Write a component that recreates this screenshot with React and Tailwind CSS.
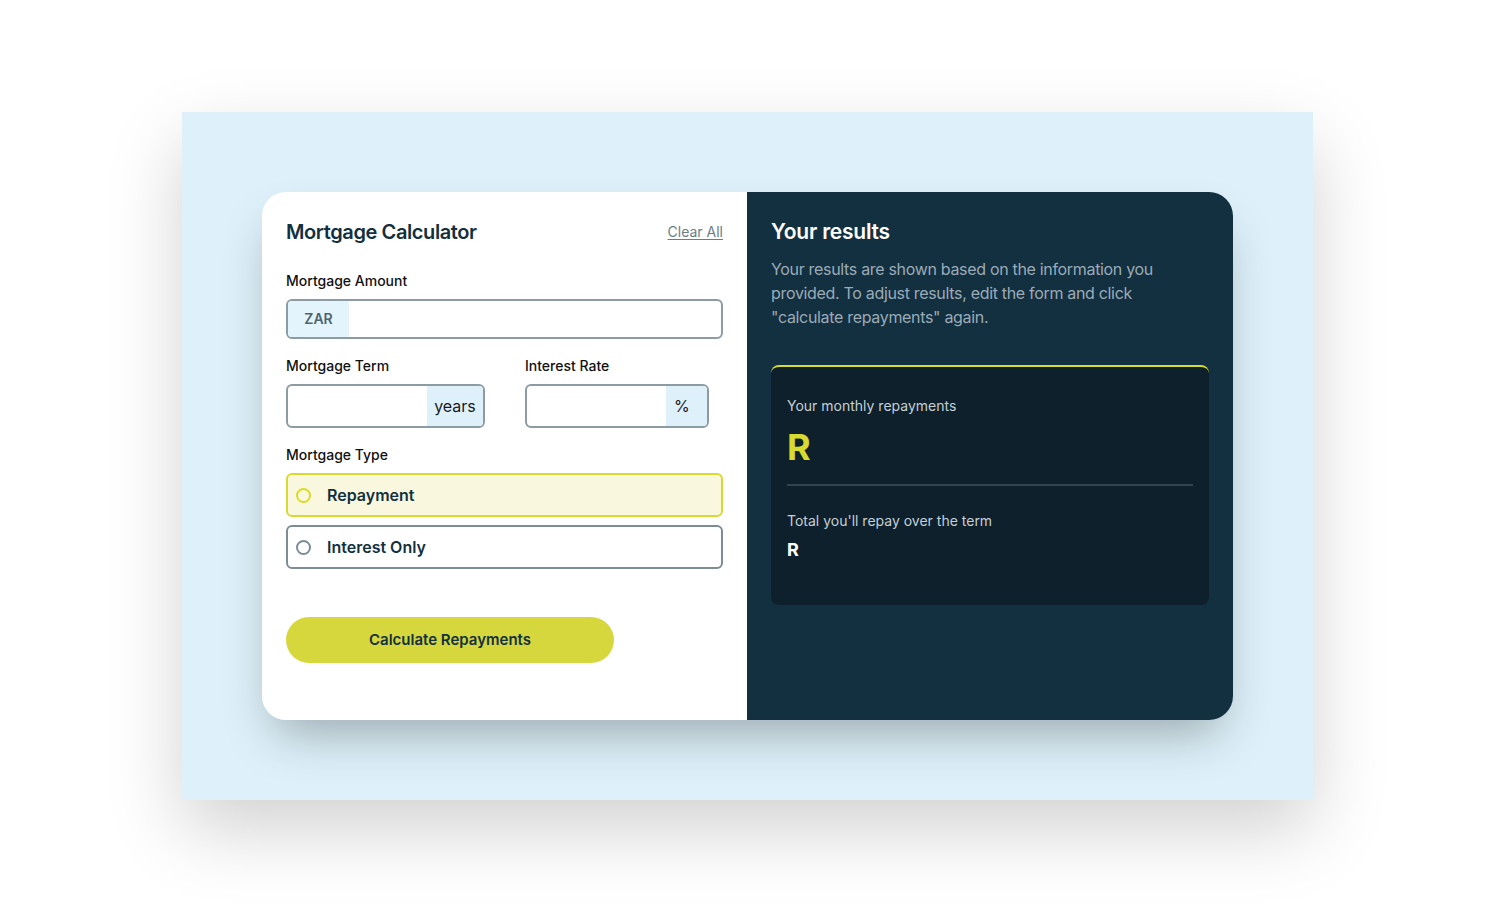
export default function App() {
  return (
    <div className="min-h-[903px] bg-white flex justify-center pt-[112px] pl-[3px]" style={{ fontFamily: "Inter, 'Noto Sans', sans-serif" }}>
      <div className="w-[1131px] h-[688px] bg-[#def1fa] shadow-[0_30px_70px_rgba(0,0,0,0.18)] flex justify-center pt-[80px]">
        <div className="w-[971px] h-[528px] flex rounded-3xl shadow-[0_25px_50px_-12px_rgba(0,0,0,0.3)]">
          {/* Form */}
          <div className="w-[485px] bg-white rounded-l-3xl p-6">
            <div className="flex items-center justify-between h-7 mt-0.5">
              <h1 className="text-xl font-semibold tracking-[-0.02em] text-[#133040]">Mortgage Calculator</h1>
              <button className="text-sm text-[#6b7c88] underline underline-offset-2">Clear All</button>
            </div>

            <label className="block mt-[25px] mb-2 text-sm font-medium text-[#111] leading-5">Mortgage Amount</label>
            <div className="flex h-10 border-2 border-[#8d9ba3] rounded-md overflow-hidden">
              <span className="w-[61px] bg-[#e3f4fc] flex items-center justify-center text-sm font-semibold text-[#4e6470]">ZAR</span>
              <input className="flex-1 outline-none px-3" />
            </div>

            <div className="flex gap-10 mt-[17px]">
              <div>
                <label className="block mb-2 text-sm font-medium text-[#111] leading-5">Mortgage Term</label>
                <div className="flex w-[199px] h-11 border-2 border-[#8d9ba3] rounded-md overflow-hidden">
                  <input className="flex-1 min-w-0 outline-none px-3" />
                  <span className="w-[56px] bg-[#def1fa] flex items-center justify-center text-base text-[#1a1a1a]">years</span>
                </div>
              </div>
              <div>
                <label className="block mb-2 text-sm font-medium text-[#111] leading-5">Interest Rate</label>
                <div className="flex w-[184px] h-11 border-2 border-[#8d9ba3] rounded-md overflow-hidden">
                  <input className="flex-1 min-w-0 outline-none px-3" />
                  <span className="w-[41px] bg-[#def1fa] flex items-center pl-[8px] text-base text-[#1a1a1a]">%</span>
                </div>
              </div>
            </div>

            <label className="block mt-[17px] mb-2 text-sm font-medium text-[#111] leading-5">Mortgage Type</label>
            <div className="flex items-center h-11 border-2 border-[#d8db2f] bg-[#f9f8de] rounded-md pl-[8px]">
              <span className="w-[15px] h-[15px] rounded-full border-2 border-[#d8db2f]"></span>
              <span className="ml-4 text-base font-semibold text-[#133040]">Repayment</span>
            </div>
            <div className="flex items-center h-11 border-2 border-[#7d8d96] rounded-md pl-[8px] mt-2">
              <span className="w-[15px] h-[15px] rounded-full border-2 border-[#7d8d96]"></span>
              <span className="ml-4 text-base font-semibold text-[#133040]">Interest Only</span>
            </div>

            <button className="mt-12 w-[328px] h-[46px] rounded-full bg-[#d6d73c] text-[15px] font-semibold text-[#133040]">
              Calculate Repayments
            </button>
          </div>

          {/* Results */}
          <div className="w-[486px] bg-[#133040] rounded-r-3xl p-6">
            <h2 className="text-[21px] leading-8 font-semibold tracking-[-0.01em] text-white">Your results</h2>
            <p className="mt-[9px] max-w-[390px] text-base leading-6 tracking-[-0.02em] text-[#9aabb7]">
              Your results are shown based on the information you provided. To adjust results, edit the form and click "calculate repayments" again.
            </p>
            <div className="mt-9 h-[240px] bg-[#0e202b] border-t-2 border-[#d8db2f] rounded-lg px-4 pt-[29px]">
              <p className="text-sm leading-5 text-[#c4cfd6]">Your monthly repayments</p>
              <p className="mt-[11px] text-4xl leading-10 font-bold text-[#d8db2f]">R</p>
              <div className="mt-[17px] h-[2px] bg-[#33444e]"></div>
              <p className="mt-[25px] text-sm leading-5 text-[#c4cfd6]">Total you'll repay over the term</p>
              <p className="mt-[5px] text-lg leading-7 font-bold text-white">R</p>
            </div>
          </div>
        </div>
      </div>
    </div>
  )
}
